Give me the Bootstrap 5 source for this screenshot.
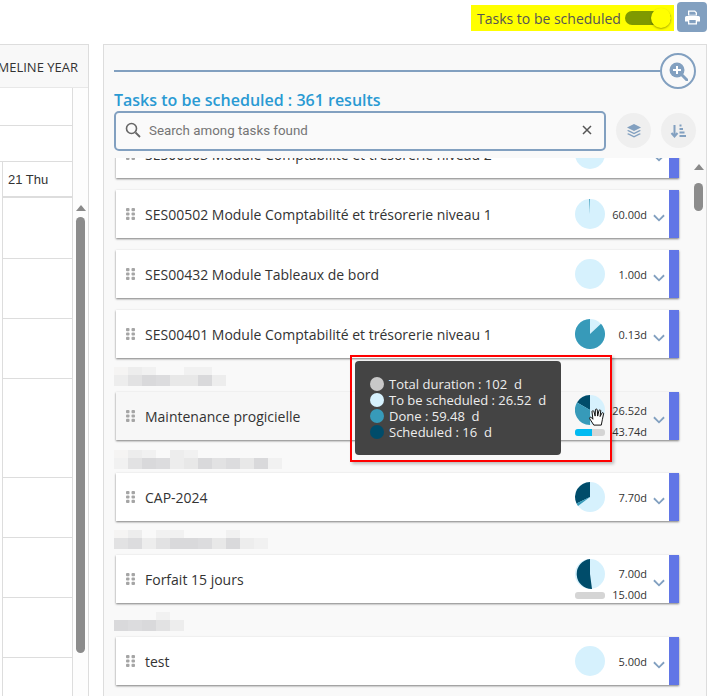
<!DOCTYPE html>
<html lang="en"><head><meta charset="utf-8">
<link href="https://cdn.jsdelivr.net/npm/bootstrap@5.3.0/dist/css/bootstrap.min.css" rel="stylesheet">
<style>
html,body{height:100%;overflow:hidden;background:#fff}
body{font-family:"Open Sans","Noto Sans",sans-serif;color:#333;font-size:13px}
.topzone{height:44px;padding-right:16px;padding-top:2px}
.hl-toggle{background:#ff0;height:26px;width:203px;font-size:14px;color:#555;padding:0 0 0 6px;margin-top:3px;margin-right:3px}
.sw-track{width:46px;height:14px;background:#7f9900;border-radius:7px;margin-left:4px;position:relative}
.sw-knob{position:absolute;right:0;top:-3px;width:20px;height:20px;border-radius:50%;background:#ff0;box-shadow:0 1px 2px rgba(0,0,0,.35)}
.print-b{width:30px;height:30px;background:#82a0c0;border-radius:4px;border:0;padding:0}
.main-zone{height:652px;padding-right:16px}
.left-p{width:89px;border:1px solid #ddd;border-left:0;border-bottom:0;position:relative;overflow:hidden;flex:none;background:#fdfdfd}
.left-h{height:43px;background:#f8f8f8;border-bottom:1px solid #e8e8e8;font-size:13px;white-space:nowrap;color:#333;display:flex;justify-content:flex-end;padding:13px 10px 0 0;line-height:18px}
.left-h span{flex:none}
.gridwrap{width:73px;border-right:1px solid #ddd;height:100%;background:#fff}
.gr{border-bottom:1px solid #ddd}
.gr-a{height:38px}.gr-b{height:36px}.gr-c{height:61px}.gr-d{height:60px}.gr-e{height:99px}
.gr-low{margin-left:2px;border-left:1px solid #ddd;height:100%}
.daycell{height:36px;border-bottom:2px solid #ddd;font:13px/15px "Liberation Sans",sans-serif;padding:10px 0 0 5px}
.sb-a{position:absolute;left:76px;width:0;top:160px;border-left:5px solid transparent;border-right:5px solid transparent;border-bottom:6px solid #8a8a8a;height:0}
.sb-t{position:absolute;left:76px;width:9px;top:172px;height:436px;border-radius:5px;background:#8c8c8c}
.right-p{margin-left:14px;flex:1;background:#f9f9f9;border:1px solid #ddd;border-bottom:0;position:relative;overflow:hidden;padding:0 10px}
.rule-row{height:52px;padding-top:2px;position:relative}
.rule-l{flex:1;height:2px;background:#82a0c0;margin-top:23px}
.zoom-c{width:36px;height:36px;border:2px solid #82a0c0;border-radius:50%;flex:none;margin-top:6px}
.rttl{color:#2a9ad3;font-size:16px;font-weight:600;line-height:22px;margin-top:-8px;height:21px}
.sr-row{height:40px;margin-top:1px}
.s-box{width:492px;height:40px;border:2px solid #82a0c0;border-radius:5px;background:#fafafa;padding:0 8px 2px 9px;color:#757575;font:13.33px Roboto,sans-serif}
.rb{width:35px;height:35px;border-radius:50%;background:#efefef;flex:none;margin-left:10px;margin-bottom:1px}
.t-list{height:538px;overflow:hidden;position:relative;margin-top:7px;padding-right:16px}
.tk{background:#fff;height:48px;margin:0 0 0 2px;box-shadow:0 1px 2px rgba(0,0,0,.5);border-right:10px solid #6176e6;position:relative;width:563px;display:flex;align-items:center;font-size:14px;color:#333;padding-left:10px;flex:none}
.tk-first{margin-top:-28px}
.tk-hov{background:#f7f7f7}
.grip{width:9px;height:12px;margin-right:10px;flex:none}
.tk-n{flex:1;white-space:nowrap}
.pie{position:absolute;left:459px;top:9px;width:30px;height:30px}
.pie-h{top:3px}.pie-f{top:4px}
.d1{position:absolute;right:22px;top:18px;font-size:11px;color:#333;line-height:14px}
.d1-two{top:12px}
.d2{position:absolute;right:22px;top:33px;font-size:11px;color:#333;line-height:14px}
.chev{position:absolute;right:4px;top:24px}
.pbar{position:absolute;left:459px;top:37px;width:30px;height:7px;border-radius:3px;background:#d5d5d5;overflow:hidden}
.pbar i{display:block;height:100%;background:#00baf2}
.gap1{height:12px}
.gap2{height:34px;padding-top:9px;overflow:hidden}
.gap3{height:33px;padding-top:10px;overflow:hidden}
.mz-r{display:flex}
.mz-r i{display:block;width:14px;flex:none}
.mz-t{height:8px}.mz-b{height:11px}
.c1{background:#ededed}.c2{background:#e2e2e3}.c3{background:#d9d9db}.c4{background:#e8e8e8}.c5{background:#f1f1f1}.c6{background:#f5f4f3}.c7{background:#dcdcde}.c0{background:transparent}
.scr-a{position:absolute;left:590px;top:119px;border-left:5px solid transparent;border-right:5px solid transparent;border-bottom:6px solid #8a8a8a}
.scr-t{position:absolute;left:590px;top:138px;width:9px;height:28px;background:#8c8c8c;border-radius:5px}
.tip{position:absolute;left:251px;top:316px;width:206px;height:94px;background:#444;border-radius:4px;color:#eee;font-size:13px;line-height:16px;padding:15px 14px 15px 15px}
.tip div{display:flex;align-items:center;white-space:pre}
.tip b{display:block;width:14px;height:14px;border-radius:50%;margin-right:5px;flex:none}
.t-c1{background:#c8c8c8}.t-c2{background:#d6f1fd}.t-c3{background:#379ab9}.t-c4{background:#004c6a}
.redbox{position:absolute;left:246px;top:310px;width:262px;height:107px;border:2px solid #f00;box-shadow:2px 2px 3px rgba(0,0,0,.25)}
.hand{position:absolute;left:484px;top:363px}
</style></head><body>
<div class="topzone d-flex justify-content-end align-items-start">
 <div class="hl-toggle d-flex align-items-center"><span>Tasks to be scheduled</span><span class="sw-track"><span class="sw-knob"></span></span></div>
 <button class="print-b d-flex align-items-center justify-content-center" aria-label="Print"><svg width="15" height="15" viewBox="0 0 15 14"><path fill="#fff" d="M3 0h7l2 2v3H3zM4.300 1.200v3h6.400V2.400L9.500 1.200zM1.500 5.500h12A1.500 1.500 0 0 1 15 7v4h-3v3H3v-3H0V7a1.500 1.500 0 0 1 1.500-1.500zM4.300 9.500v3.200h6.400V9.500z"/></svg></button>
</div>
<div class="main-zone d-flex">
 <div class="left-p">
  <div class="left-h"><span>TIMELINE YEAR</span></div>
  <div class="gridwrap">
   <div class="gr gr-a"></div>
   <div class="gr gr-b"></div>
   <div class="gr-low">
    <div class="daycell">21 Thu</div>
    <div class="gr gr-c"></div><div class="gr gr-d"></div><div class="gr gr-d"></div><div class="gr gr-e"></div><div class="gr gr-d"></div><div class="gr gr-d"></div><div class="gr gr-d"></div>
   </div>
  </div>
  <div class="sb-a"></div><div class="sb-t"></div>
 </div>
 <div class="right-p">
  <div class="rule-row d-flex align-items-start"><div class="rule-l"></div><div class="zoom-c d-flex align-items-center justify-content-center"><svg width="20" height="20" viewBox="0 0 20 20"><circle cx="9" cy="9" r="7.500" fill="#82a0c0"/><path d="M14 14l5 5" stroke="#82a0c0" stroke-width="3" stroke-linecap="round"/><path d="M9 5v8M5 9h8" stroke="#fff" stroke-width="2"/></svg></div></div>
  <div class="rttl">Tasks to be scheduled : 361 results</div>
  <div class="sr-row d-flex align-items-center">
   <div class="s-box d-flex align-items-center"><svg width="16" height="16" viewBox="0 0 16 16" class="me-2"><circle cx="6.500" cy="6.500" r="5" fill="none" stroke="#666" stroke-width="1.600"/><path d="M10.500 10.500l4.500 4.500" stroke="#666" stroke-width="1.800"/></svg><span class="flex-grow-1">Search among tasks found</span><svg width="10" height="10" viewBox="0 0 10 10" class="me-1"><path d="M1 1l8 8M9 1l-8 8" stroke="#555" stroke-width="1.500"/></svg></div>
   <div class="rb d-flex align-items-center justify-content-center"><svg width="16" height="16" viewBox="0 0 16 16" fill="#82a0c0"><path d="M8 1l7 3.500-7 3.500-7-3.500z"/><path d="M2.500 7L8 9.800 13.500 7 15 7.800l-7 3.500-7-3.500z"/><path d="M2.500 10.300L8 13l5.500-2.700 1.500.8L8 14.600 1 11.100z"/></svg></div>
   <div class="rb d-flex align-items-center justify-content-center"><svg width="17" height="16" viewBox="0 0 16 16"><path d="M4 2v11M1 10l3 3.500L7 10" fill="none" stroke="#82a0c0" stroke-width="2"/><path d="M9 2.500h2M9 6h3.500M9 9.500h5M9 13h6.500" stroke="#82a0c0" stroke-width="1.800"/></svg></div>
  </div>
  <div class="t-list">
   <div class="tk tk-first"><svg class="grip" viewBox="0 0 9 12"><use href="#gr"/></svg><span class="tk-n">SES00503 Module Comptabilité et trésorerie niveau 2</span>
     <svg class="pie"><circle cx="15" cy="15" r="15" fill="#d6f1fd"/></svg>
     <svg class="chev" width="12" height="8" viewBox="0 0 13 8"><path d="M1 1l5.500 5.500L12 1" fill="none" stroke="#82a0c0" stroke-width="2"/></svg></div>
   <div class="gap1"></div>
   <div class="tk"><svg class="grip" viewBox="0 0 9 12"><use href="#gr"/></svg><span class="tk-n">SES00502 Module Comptabilité et trésorerie niveau 1</span>
     <svg class="pie"><circle cx="15" cy="15" r="15" fill="#d6f1fd"/><path d="M15 15L14.200 0H15z" fill="#379ab9"/></svg><span class="d1">60.00d</span>
     <svg class="chev" width="12" height="8" viewBox="0 0 13 8"><path d="M1 1l5.500 5.500L12 1" fill="none" stroke="#82a0c0" stroke-width="2"/></svg></div>
   <div class="gap1"></div>
   <div class="tk"><svg class="grip" viewBox="0 0 9 12"><use href="#gr"/></svg><span class="tk-n">SES00432 Module Tableaux de bord</span>
     <svg class="pie"><circle cx="15" cy="15" r="15" fill="#d6f1fd"/></svg><span class="d1">1.00d</span>
     <svg class="chev" width="12" height="8" viewBox="0 0 13 8"><path d="M1 1l5.500 5.500L12 1" fill="none" stroke="#82a0c0" stroke-width="2"/></svg></div>
   <div class="gap1"></div>
   <div class="tk"><svg class="grip" viewBox="0 0 9 12"><use href="#gr"/></svg><span class="tk-n">SES00401 Module Comptabilité et trésorerie niveau 1</span>
     <svg class="pie"><circle cx="15" cy="15" r="15" fill="#d6f1fd"/><path d="M15 15L26 4.800A15 15 0 1 1 15 0z" fill="#379ab9"/></svg><span class="d1">0.13d</span>
     <svg class="chev" width="12" height="8" viewBox="0 0 13 8"><path d="M1 1l5.500 5.500L12 1" fill="none" stroke="#82a0c0" stroke-width="2"/></svg></div>
   <div class="gap2">
    <div class="mz-r mz-t"><i class="c6"></i><i class="c1"></i><i class="c5"></i><i class="c0"></i><i class="c0"></i><i class="c5"></i><i class="c5"></i></div>
    <div class="mz-r mz-b"><i class="c1"></i><i class="c2"></i><i class="c3"></i><i class="c7"></i><i class="c4"></i><i class="c4"></i><i class="c3"></i><i class="c1"></i></div>
   </div>
   <div class="tk tk-hov"><svg class="grip" viewBox="0 0 9 12"><use href="#gr"/></svg><span class="tk-n">Maintenance progicielle</span>
     <svg class="pie pie-h"><circle cx="15" cy="15" r="15" fill="#d6f1fd"/><path d="M15 15L15 0A15 15 0 0 0 2 7.500z" fill="#004c6a"/><path d="M15 15L2 7.500A15 15 0 0 0 15 30z" fill="#379ab9"/></svg>
     <span class="d1 d1-two">26.52d</span><span class="d2">43.74d</span><div class="pbar"><i style="width:55%"></i></div>
     <svg class="chev" width="12" height="8" viewBox="0 0 13 8"><path d="M1 1l5.500 5.500L12 1" fill="none" stroke="#82a0c0" stroke-width="2"/></svg></div>
   <div class="gap3">
    <div class="mz-r mz-t"><i class="c6"></i><i class="c1"></i><i class="c5"></i><i class="c0"></i><i class="c1"></i><i class="c5"></i></div>
    <div class="mz-r mz-b"><i class="c5"></i><i class="c2"></i><i class="c3"></i><i class="c7"></i><i class="c1"></i><i class="c4"></i><i class="c3"></i><i class="c2"></i><i class="c7"></i><i class="c4"></i><i class="c3"></i><i class="c5"></i></div>
   </div>
   <div class="tk"><svg class="grip" viewBox="0 0 9 12"><use href="#gr"/></svg><span class="tk-n">CAP-2024</span>
     <svg class="pie"><circle cx="15" cy="15" r="15" fill="#d6f1fd"/><path d="M15 15L1.500 21.500A15 15 0 0 1 15 0z" fill="#004c6a"/><path d="M15 15L1.500 21.500 3 24z" fill="#379ab9"/></svg><span class="d1">7.70d</span>
     <svg class="chev" width="12" height="8" viewBox="0 0 13 8"><path d="M1 1l5.500 5.500L12 1" fill="none" stroke="#82a0c0" stroke-width="2"/></svg></div>
   <div class="gap2">
    <div class="mz-r mz-t"><i class="c6"></i><i class="c1"></i><i class="c0"></i><i class="c5"></i><i class="c5"></i><i class="c0"></i><i class="c0"></i><i class="c0"></i><i class="c5"></i></div>
    <div class="mz-r mz-b"><i class="c2"></i><i class="c7"></i><i class="c1"></i><i class="c2"></i><i class="c3"></i><i class="c3"></i><i class="c7"></i><i class="c4"></i><i class="c3"></i><i class="c1"></i><i class="c5"></i></div>
   </div>
   <div class="tk"><svg class="grip" viewBox="0 0 9 12"><use href="#gr"/></svg><span class="tk-n">Forfait 15 jours</span>
     <svg class="pie pie-f"><circle cx="15" cy="15" r="15" fill="#d6f1fd"/><path d="M15 15L15 0A15 15 0 0 0 17 29.900z" fill="#004c6a"/></svg>
     <span class="d1 d1-two">7.00d</span><span class="d2">15.00d</span><div class="pbar"></div>
     <svg class="chev" width="12" height="8" viewBox="0 0 13 8"><path d="M1 1l5.500 5.500L12 1" fill="none" stroke="#82a0c0" stroke-width="2"/></svg></div>
   <div class="gap2">
    <div class="mz-r mz-t"><i class="c0"></i><i class="c0"></i><i class="c0"></i><i class="c5"></i></div>
    <div class="mz-r mz-b"><i class="c3"></i><i class="c7"></i><i class="c3"></i><i class="c2"></i><i class="c1"></i></div>
   </div>
   <div class="tk"><svg class="grip" viewBox="0 0 9 12"><use href="#gr"/></svg><span class="tk-n">test</span>
     <svg class="pie"><circle cx="15" cy="15" r="15" fill="#d6f1fd"/></svg><span class="d1">5.00d</span>
     <svg class="chev" width="12" height="8" viewBox="0 0 13 8"><path d="M1 1l5.500 5.500L12 1" fill="none" stroke="#82a0c0" stroke-width="2"/></svg></div>
  </div>
  <div class="scr-a"></div><div class="scr-t"></div>
  <div class="redbox"></div>
  <div class="tip">
   <div><b class="t-c1"></b>Total duration : 102  d</div>
   <div><b class="t-c2"></b>To be scheduled : 26.52  d</div>
   <div><b class="t-c3"></b>Done : 59.48  d</div>
   <div><b class="t-c4"></b>Scheduled : 16  d</div>
  </div>
  <svg class="hand" width="17" height="18" viewBox="0 0 18 20"><path d="M6 19L1.500 12c-.8-1.500 1-2.500 2-1.300L5 12.500 4 4c0-1.300 2-1.300 2.200 0L7.500 9 7.800 2.200c0-1.400 2-1.400 2.100 0L10.300 9l1.400-6c.3-1.300 2.200-1 2 .3L13 9.500l2-3.800c.7-1.100 2.300-.4 1.800.9L15.500 13l-1.200 6z" fill="#fff" stroke="#111" stroke-width="1.100" stroke-linejoin="round"/></svg>
 </div>
</div>
<svg width="0" height="0" class="position-absolute"><defs><g id="gr" fill="#a5a5a5"><rect width="3.500" height="3.200" rx="1"/><rect x="5.500" width="3.500" height="3.200" rx="1"/><rect y="4.400" width="3.500" height="3.200" rx="1"/><rect x="5.500" y="4.400" width="3.500" height="3.200" rx="1"/><rect y="8.800" width="3.500" height="3.200" rx="1"/><rect x="5.500" y="8.800" width="3.500" height="3.200" rx="1"/></g></defs></svg>
<script src="https://cdn.jsdelivr.net/npm/bootstrap@5.3.0/dist/js/bootstrap.bundle.min.js"></script>
</body></html>
